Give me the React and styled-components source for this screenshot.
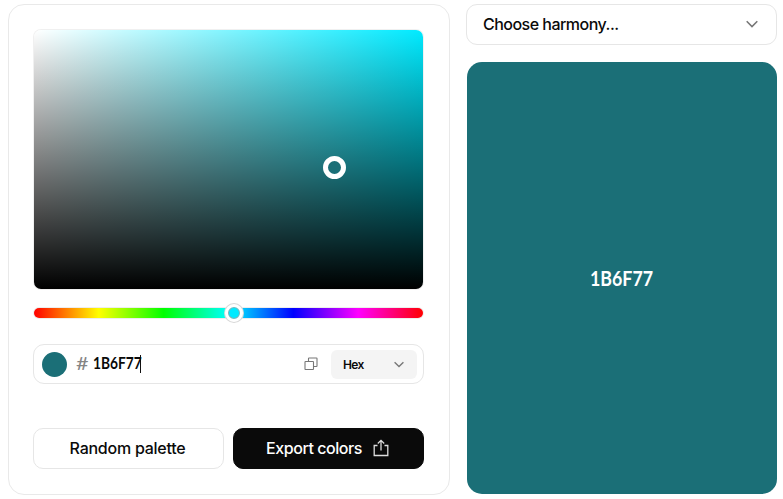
import React from 'react';
import styled, { createGlobalStyle } from 'styled-components';

const Global = createGlobalStyle`
  * { box-sizing: border-box; }
  body { margin: 0; background: #fff; color: #0a0a0a; font-family: Inter, "Liberation Sans", sans-serif; }
  button { font: inherit; color: inherit; }
`;

const Page = styled.main`
  display: grid;
  grid-template-columns: 442px 311px;
  column-gap: 16px;
  width: 783px;
  height: 499px;
  padding: 4px 5px 4px 8px;
  overflow: hidden;
`;

const Panel = styled.section`
  display: flex;
  flex-direction: column;
  border: 1px solid #e9e9e9;
  border-radius: 16px;
  padding: 25px 25px 24px 24px;
`;

const Spectrum = styled.div`
  position: relative;
  height: 259px;
  flex: none;
  margin: 0 1px;
  border-radius: 7px;
  background: linear-gradient(to top, #000, transparent), linear-gradient(to right, #fff, #00eaff);
  box-shadow: 0 0 0 1px rgba(0, 0, 0, 0.06);
`;

const SpectrumHandle = styled.span`
  position: absolute;
  left: 289px;
  top: 126px;
  width: 23px;
  height: 23px;
  border: 5px solid #fff;
  border-radius: 50%;
  background: #1b6f77;
`;

const Hue = styled.div`
  position: relative;
  flex: none;
  height: 10px;
  margin: 19px 1px 0;
  border-radius: 5px;
  background: linear-gradient(to right, #f00, #ff0, #0f0, #0ff, #00f, #f0f, #f00);
  box-shadow: 0 0 0 1px rgba(0, 0, 0, 0.07);
`;

const HueHandle = styled.span`
  position: absolute;
  left: 191px;
  top: -4px;
  width: 18px;
  height: 18px;
  border: 3px solid #fff;
  border-radius: 50%;
  background: #00eaff;
  box-shadow: 0 0 0 1px #d8d8d8, inset 0 0 0 1px #8aaeb2;
`;

const ColorField = styled.div`
  display: flex;
  align-items: center;
  height: 40px;
  flex: none;
  margin-top: 26px;
  padding: 0 6px 0 8px;
  border: 1px solid #e6e6e6;
  border-radius: 11px;
`;

const Dot = styled.span`
  width: 25px;
  height: 25px;
  border-radius: 50%;
  background: #1b6f77;
`;

const Hash = styled.span`
  width: 17px;
  margin: -2px 0 0 9px;
  font-family: Lato, sans-serif;
  font-size: 18px;
  line-height: 24px;
  color: #858585;
  transform: scaleX(1.2);
  transform-origin: left;
`;

const HexValue = styled.span`
  display: inline-block;
  margin-top: -3px;
  font-family: Lato, sans-serif;
  font-weight: 700;
  font-size: ${(p) => p.$size}px;
  line-height: 24px;
  white-space: nowrap;
  width: ${(p) => p.$width}px;
  transform: scaleX(${(p) => p.$squeeze});
  transform-origin: left;
`;

const Caret = styled.span`
  width: 1px;
  height: 18px;
  margin-top: -1px;
  background: #111;
`;

const CopyIcon = styled.svg`
  margin-left: auto;
  flex: none;
`;

const Format = styled.button`
  display: flex;
  align-items: center;
  justify-content: space-between;
  width: 86px;
  height: 29px;
  margin-left: 13px;
  padding: 0 13px 0 12px;
  border: 0;
  border-radius: 6px;
  background: #f4f4f4;
  font-size: 12px;
  font-weight: 600;
  letter-spacing: -0.7px;
`;

const Actions = styled.div`
  display: grid;
  grid-template-columns: 191px 191px;
  column-gap: 9px;
  margin-top: 44px;
`;

const Action = styled.button`
  display: flex;
  align-items: center;
  justify-content: center;
  gap: 11px;
  height: 41px;
  padding: 0 2px 1px 0;
  border: 1px solid ${(p) => (p.$dark ? '#0a0a0a' : '#e6e6e6')};
  border-radius: 10px;
  background: ${(p) => (p.$dark ? '#0a0a0a' : '#fff')};
  color: ${(p) => (p.$dark ? '#fff' : '#0a0a0a')};
  font-size: 16px;
  font-weight: 500;
  letter-spacing: ${(p) => p.$tracking}px;
  white-space: nowrap;
`;

const Side = styled.aside`
  display: flex;
  flex-direction: column;
  gap: 17px;
`;

const Harmony = styled.button`
  display: flex;
  align-items: center;
  justify-content: space-between;
  height: 41px;
  flex: none;
  padding: 0 18px 2px 16px;
  border: 1px solid #e6e6e6;
  border-radius: 11px;
  background: #fff;
  font-size: 16px;
  font-weight: 500;
  letter-spacing: -0.52px;
`;

const Swatch = styled.div`
  display: flex;
  align-items: center;
  justify-content: center;
  height: 432px;
  margin-left: 1px;
  border-radius: 15px;
  background: #1b6f77;
  color: #fff;
  padding: 3px 2px 0 0;
`;

function Chevron({ width }) {
  return (
    <svg width={width} height={width / 2 + 2} viewBox="0 0 12 8" fill="none" stroke="#777" strokeWidth="1.6">
      <path d="M.7 1.2 6 6.5l5.3-5.3" />
    </svg>
  );
}

export default function App() {
  return (
    <>
      <Global />
      <Page>
        <Panel>
          <Spectrum><SpectrumHandle /></Spectrum>
          <Hue><HueHandle /></Hue>
          <ColorField>
            <Dot />
            <Hash>#</Hash>
            <HexValue $size={17} $width={47} $squeeze={0.81}>1B6F77</HexValue>
            <Caret />
            <CopyIcon width="14" height="14" viewBox="0 0 14 14" fill="none" stroke="#777" strokeWidth="1.1">
              <rect x="1" y="4.5" width="8.5" height="8" rx=".6" />
              <path d="M4.5 4.5V1.6q0-.6.6-.6h7.3q.6 0 .6.6v7.3q0 .6-.6.6H9.5" />
            </CopyIcon>
            <Format>Hex<Chevron width={10} /></Format>
          </ColorField>
          <Actions>
            <Action $tracking={-0.25}>Random palette</Action>
            <Action $dark $tracking={-0.45}>
              Export colors
              <svg width="16" height="18" viewBox="0 0 16 18" fill="none" stroke="#ddd" strokeWidth="1.3">
                <path d="M4.5 6.5H1.2v10h13.6v-10h-3.3M8 11.5V1.5M4.8 4.5 8 1.3l3.2 3.2" />
              </svg>
            </Action>
          </Actions>
        </Panel>
        <Side>
          <Harmony>Choose harmony...<Chevron width={12} /></Harmony>
          <Swatch><HexValue $size={20} $width={62} $squeeze={0.89}>1B6F77</HexValue></Swatch>
        </Side>
      </Page>
    </>
  );
}
